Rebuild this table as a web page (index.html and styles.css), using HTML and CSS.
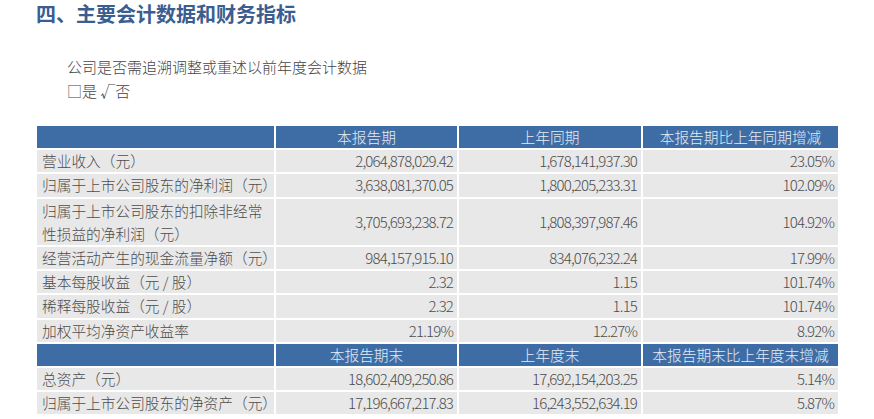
FILE: index.html
```html
<!DOCTYPE html>
<html lang="zh-CN">
<head>
<meta charset="utf-8">
<link rel="stylesheet" href="styles.css">
</head>
<body>
<div class="page">
  <h1 class="title">四、主要会计数据和财务指标</h1>
  <p class="note">公司是否需追溯调整或重述以前年度会计数据</p>
  <p class="note choice">□是 √否</p>
  <div class="grid">
    <div class="th"></div><div class="th">本报告期</div><div class="th">上年同期</div><div class="th">本报告期比上年同期增减</div>
    <div class="lbl">营业收入（元）</div><div class="num">2,064,878,029.42</div><div class="num">1,678,141,937.30</div><div class="num">23.05%</div>
    <div class="lbl">归属于上市公司股东的净利润（元）</div><div class="num">3,638,081,370.05</div><div class="num">1,800,205,233.31</div><div class="num">102.09%</div>
    <div class="lbl tall">归属于上市公司股东的扣除非经常性损益的净利润（元）</div><div class="num tall">3,705,693,238.72</div><div class="num tall">1,808,397,987.46</div><div class="num tall">104.92%</div>
    <div class="lbl">经营活动产生的现金流量净额（元）</div><div class="num">984,157,915.10</div><div class="num">834,076,232.24</div><div class="num">17.99%</div>
    <div class="lbl">基本每股收益（元 / 股）</div><div class="num">2.32</div><div class="num">1.15</div><div class="num">101.74%</div>
    <div class="lbl">稀释每股收益（元 / 股）</div><div class="num">2.32</div><div class="num">1.15</div><div class="num">101.74%</div>
    <div class="lbl">加权平均净资产收益率</div><div class="num">21.19%</div><div class="num">12.27%</div><div class="num">8.92%</div>
    <div class="th"></div><div class="th">本报告期末</div><div class="th">上年度末</div><div class="th">本报告期末比上年度末增减</div>
    <div class="lbl">总资产（元）</div><div class="num">18,602,409,250.86</div><div class="num">17,692,154,203.25</div><div class="num">5.14%</div>
    <div class="lbl">归属于上市公司股东的净资产（元）</div><div class="num">17,196,667,217.83</div><div class="num">16,243,552,634.19</div><div class="num">5.87%</div>
  </div>
</div>
</body>
</html>
```
FILE: styles.css
```css
html, body {
  margin: 0;
  padding: 0;
  background: #ffffff;
}
.page {
  font-family: "Noto Sans CJK SC", "Noto Sans", sans-serif;
  color: #4d4d4d;
  padding: 0 0 0 36px;
}
.title {
  margin: 0;
  padding-top: 1px;
  font-size: 20px;
  line-height: 26px;
  font-weight: 700;
  color: #3b5d8f;
}
.note {
  margin: 0;
  padding-left: 31px;
  font-size: 15px;
  line-height: 22px;
  font-weight: 300;
  color: #444;
}
.note:first-of-type {
  margin-top: 29px;
}
.choice {
  margin-top: 2px;
}
.grid {
  margin-top: 24px;
  margin-left: 1px;
  display: grid;
  grid-template-columns: 237px 181px 182px 195px;
  grid-auto-rows: 22.2px;
  gap: 2px 2px;
  font-size: 14.7px;
  font-weight: 300;
}
.grid > div {
  display: flex;
  align-items: center;
  background: #e8e8e8;
  line-height: 22px;
  white-space: nowrap;
}
.grid > .th {
  background: #3e6da6;
  color: #e4ebf4;
  justify-content: center;
}
.lbl {
  padding-left: 5px;
}
.grid > .lbl.tall {
  white-space: normal;
  line-height: 23px;
  padding-right: 2px;
}
.num {
  justify-content: flex-end;
  padding-right: 4px;
  font-size: 15px;
  letter-spacing: -0.85px;
}
.tall {
  grid-row: span 2;
}
```
